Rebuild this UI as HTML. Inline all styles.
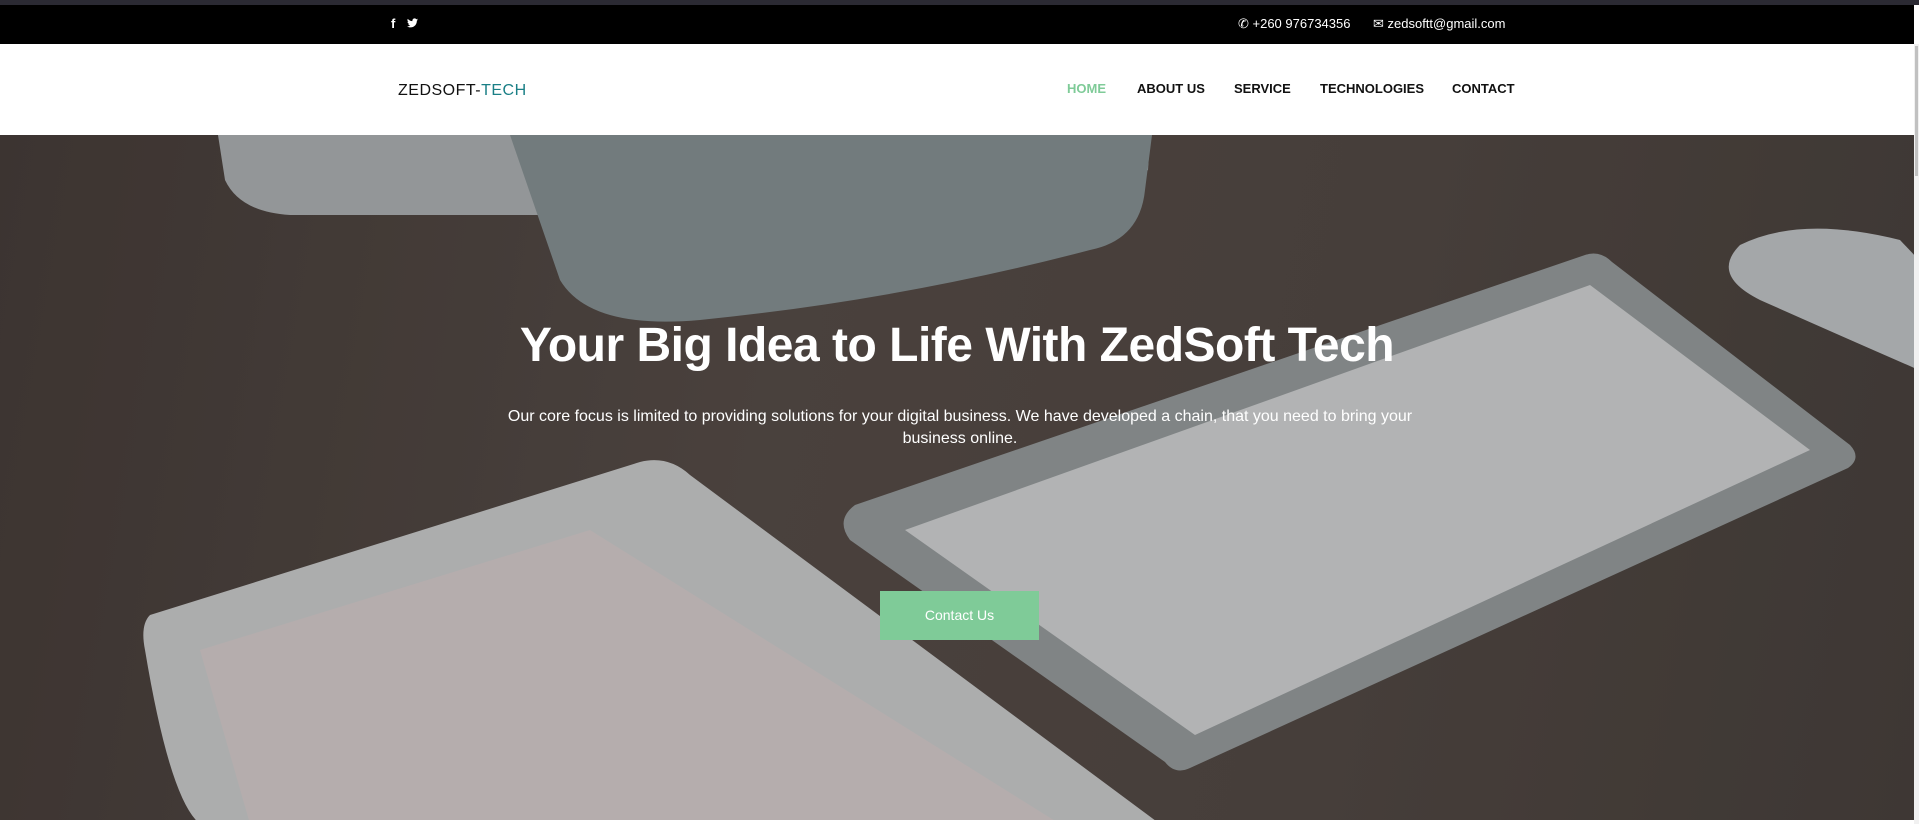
<!DOCTYPE html>
<html><head><meta charset="utf-8"><style>
*{margin:0;padding:0;box-sizing:border-box}
body{width:1919px;height:824px;overflow:hidden;font-family:"Liberation Sans",sans-serif;background:#fff;position:relative}
.strip{position:absolute;left:0;top:0;width:1919px;height:5px;background:#2b2a33}
.top{position:absolute;left:0;top:5px;width:1914px;height:39px;background:#000;color:#fff;font-size:13px}
.nav{position:absolute;left:0;top:44px;width:1914px;height:91px;background:#fff}
.hero{position:absolute;left:0;top:135px;width:1914px;height:685px;overflow:hidden;
background:linear-gradient(100deg,#4a403c 0%,#5a504b 40%,#564c47 70%,#4c4440 100%)}
.hero svg{position:absolute;left:0;top:-135px}
.sb{position:absolute;right:0;top:44px;width:5px;height:780px;background:#f1f1f1}
.sb i{position:absolute;left:1px;top:2px;width:3px;height:130px;background:#c1c1c1}
h1{position:absolute;left:0;width:1914px;text-align:center;top:318px;font-size:48px;color:#fff;font-weight:bold;letter-spacing:-.5px}
p.d{position:absolute;left:500px;width:920px;text-align:center;top:406px;font-size:16px;line-height:22px;color:#fff}
.btn{position:absolute;left:880px;top:591px;width:159px;height:49px;background:#7fcb98;color:#fff;font-size:14px;text-align:center;line-height:49px}
.n{position:absolute;font-size:13px;font-weight:bold;color:#111}
</style></head><body>
<div class="strip"></div>
<div class="top">
 <span style="position:absolute;left:391px;top:11px;font-weight:bold">f</span>
 <svg style="position:absolute;left:407px;top:13px" width="11" height="10" viewBox="0 0 24 20"><path fill="#fff" d="M24 2.4c-.9.4-1.8.6-2.8.8 1-.6 1.8-1.6 2.2-2.7-1 .6-2 1-3.1 1.2C19.3.7 18 0 16.6 0c-2.7 0-4.9 2.2-4.9 4.9 0 .4 0 .8.1 1.1C7.7 5.8 4.1 3.9 1.7.9c-.4.7-.7 1.6-.7 2.5 0 1.7.9 3.2 2.2 4.1-.8 0-1.6-.2-2.2-.6v.1c0 2.4 1.7 4.4 3.9 4.8-.4.1-.8.2-1.3.2-.3 0-.6 0-.9-.1.6 2 2.4 3.4 4.6 3.4-1.7 1.3-3.8 2.100-6.1 2.1H0c2.2 1.4 4.8 2.2 7.5 2.2 9.1 0 14-7.5 14-14v-.6c1-.7 1.8-1.600 2.5-2.6z"/></svg>
 <span style="position:absolute;left:1238px;top:11px">✆ +260 976734356</span>
 <span style="position:absolute;left:1373px;top:11px">✉ zedsoftt@gmail.com</span>
</div>
<div class="nav">
 <span style="position:absolute;left:398px;top:38px;font-size:16px;color:#111;letter-spacing:.5px">ZEDSOFT-<span style="color:#1a7f86">TECH</span></span>
 <span class="n" style="left:1067px;top:37px;color:#7fcb98">HOME</span>
 <span class="n" style="left:1137px;top:37px">ABOUT US</span>
 <span class="n" style="left:1234px;top:37px">SERVICE</span>
 <span class="n" style="left:1320px;top:37px">TECHNOLOGIES</span>
 <span class="n" style="left:1452px;top:37px">CONTACT</span>
</div>
<div class="hero">
<svg width="1914" height="824" viewBox="0 0 1914 824">
 <!-- monitor -->
 <path d="M218 135 H1150 L1148 170 Q1100 210 1000 215 L290 215 Q240 212 225 180 Z" fill="#b4b8ba"/>
 <path d="M510 135 H1152 L1145 190 Q1140 240 1090 250 Q900 300 700 320 Q590 330 560 280 Z" fill="#8c9799"/>
 <!-- mouse -->
 <path d="M1740 245 Q1800 215 1900 240 L1919 260 V370 Q1850 340 1760 300 Q1710 275 1740 245 Z" fill="#c9cccf"/>
 <!-- keyboard -->
 <path d="M1585 255 Q1600 250 1612 262 L1850 445 Q1862 458 1848 468 L1190 768 Q1175 775 1165 762 L850 540 Q835 520 855 505 Z" fill="#9da2a3"/>
 <path d="M1590 285 L1810 450 L1195 735 L905 530 Z" fill="#d9dbdc"/>
 <!-- tablet -->
 <path d="M150 615 L640 462 Q668 455 690 475 L1160 824 L200 824 Q170 800 145 650 Q140 625 150 615 Z" fill="#d2d3d4"/>
 <path d="M200 650 L590 530 L1060 824 L250 824 Z" fill="#ddd3d3"/>
 <rect x="0" y="0" width="1914" height="824" fill="rgba(0,0,0,0.18)"/>
</svg>
</div>
<h1>Your Big Idea to Life With ZedSoft Tech</h1>
<p class="d">Our core focus is limited to providing solutions for your digital business. We have developed a chain, that you need to bring your business online.</p>
<div class="btn">Contact Us</div>
<div class="sb"><i></i></div>
</body></html>
